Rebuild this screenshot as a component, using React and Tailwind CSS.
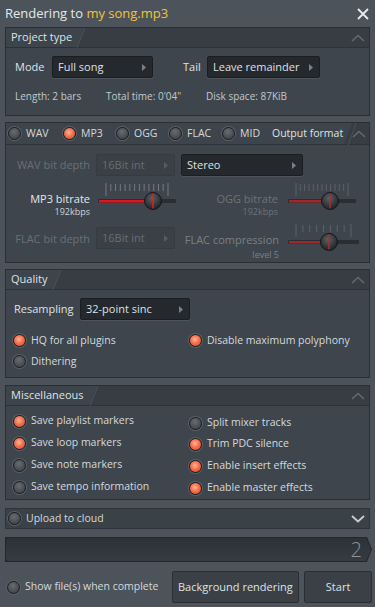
import React from "react";

const FONT = { fontFamily: '"Open Sans", "Noto Sans", sans-serif' };

function ChevronUp({ className = "mr-[4px]" }) {
  return (
    <svg width="14" height="8" viewBox="0 0 14 8" className={"shrink-0 " + className}>
      <polyline points="1,7 7,1.5 13,7" fill="none" stroke="#626970" strokeWidth="1.6" />
    </svg>
  );
}

function ChevronDown() {
  return (
    <svg width="14" height="8" viewBox="0 0 14 8" className="mr-[4px] shrink-0">
      <polyline points="1,1 7,6.5 13,1" fill="none" stroke="#c9ced2" strokeWidth="1.8" />
    </svg>
  );
}

function Radio({ on }) {
  return (
    <span
      className={
        "inline-block w-[13px] h-[13px] shrink-0 rounded-full border border-[#1c1f22] shadow-[0_0_0_1px_#5b6168] " +
        (on
          ? "bg-[radial-gradient(circle_at_45%_40%,#ffb394_0%,#f2714d_45%,#c93f22_100%)]"
          : "bg-[radial-gradient(circle_at_45%_35%,#676c71_0%,#4a4e53_60%,#383b3f_100%)]")
      }
    />
  );
}

function RadioLabel({ on, children, className = "" }) {
  return (
    <div className={"flex items-center gap-[5px] whitespace-nowrap " + className}>
      <Radio on={on} />
      <span>{children}</span>
    </div>
  );
}

function Dropdown({ text, width, disabled }) {
  return (
    <div
      className={
        "flex items-center justify-between h-[22px] rounded-[2px] pl-[5px] pr-[6px] text-[11px] whitespace-nowrap " +
        (disabled
          ? "bg-[#3a4046] border border-[#363b41] text-[#686e74]"
          : "bg-[#25292d] border border-[#1b1e21] text-[#dde1e4] shadow-[0_1px_0_#4d545b]")
      }
      style={{ width }}
    >
      <span>{text}</span>
      <svg width="4" height="7" viewBox="0 0 4 7">
        <polygon points="0,0 4,3.5 0,7" fill={disabled ? "#565c62" : "#7a8086"} />
      </svg>
    </div>
  );
}

function Slider({ width, knob, dim, n = 12, id }) {
  const ticks = [];
  for (let i = 0; i <= n; i++) {
    const x = 8 + ((width - 16) * i) / n;
    const end = i === 0 || i === n;
    ticks.push(
      <line
        key={i}
        x1={x}
        x2={x}
        y1={end ? 1 : 2}
        y2={end ? 14 : 9}
        stroke={dim ? "#5c6268" : "#757b81"}
        strokeWidth="1"
      />
    );
  }
  return (
    <svg width={width} height="30" viewBox={`0 0 ${width} 30`}>
      {ticks}
      <rect x="0" y="17" width={width} height="4" rx="1" fill="#2a2e32" />
      <rect x="1" y="18" width={knob} height="2.5" fill={dim ? "#a1272a" : "#e0161b"} />
      <defs>
        <radialGradient id={id} cx="45%" cy="35%" r="65%">
          <stop offset="0%" stopColor="#5a6065" />
          <stop offset="100%" stopColor="#1f2225" />
        </radialGradient>
      </defs>
      <circle cx={knob} cy="19" r="8.5" fill={`url(#${id})`} stroke="#15181a" strokeWidth="1" />
      <line x1={knob} x2={knob} y1="11.5" y2="26.5" stroke={dim ? "#b32a2c" : "#f01a1f"} strokeWidth="1.4" />
    </svg>
  );
}

function TabHeader({ title, tabW }) {
  return (
    <div className="relative flex h-[20px] items-center bg-[#373d43] border-b border-[#2d3237]">
      <div
        className="h-full flex items-center pl-[5px] bg-[#3d444b] [clip-path:polygon(0_0,100%_0,calc(100%-8px)_100%,0_100%)]"
        style={{ width: tabW }}
      >
        <span className="text-[11px] text-[#dfe3e6] whitespace-nowrap">{title}</span>
      </div>
      <svg width="10" height="20" className="absolute top-0" style={{ left: tabW - 9 }}>
        <line x1="9" y1="0" x2="1" y2="20" stroke="#4a5158" strokeWidth="1" />
      </svg>
      <div className="flex-1" />
      <ChevronUp />
    </div>
  );
}

function Panel({ children, height }) {
  return (
    <div
      className="mx-[5px] border border-[#2a2f34] bg-[#3e454c] flex flex-col"
      style={{ height }}
    >
      {children}
    </div>
  );
}

export default function App() {
  return (
    <div
      className="w-[375px] h-[607px] bg-[#4c535a] text-[10.5px] text-[#d5dadd] flex flex-col overflow-hidden"
      style={FONT}
    >
      {/* Title bar */}
      <div className="h-[27px] flex items-center justify-between pl-[5px] pr-[6px]">
        <div className="text-[13px] text-[#e6e9eb]">
          Rendering to <span className="text-[#f2c437]">my song.mp3</span>
        </div>
        <svg width="12" height="12" viewBox="0 0 12 12">
          <path d="M1 1 L11 11 M11 1 L1 11" stroke="#e8ebed" strokeWidth="1.8" />
        </svg>
      </div>

      {/* Project type */}
      <Panel height={89}>
        <TabHeader title="Project type" tabW={79} />
        <div className="flex items-center mt-[8px] pl-[9px]">
          <span className="w-[37px] text-[11px] text-[#dfe3e6]">Mode</span>
          <Dropdown text="Full song" width={101} />
          <span className="ml-[30px] w-[24px] text-[11px] text-[#dfe3e6]">Tail</span>
          <Dropdown text="Leave remainder" width={113} />
        </div>
        <div className="flex items-center mt-[11px] pl-[9px] text-[10px] text-[#c3c8cc]">
          <span className="w-[91px]">Length: 2 bars</span>
          <span className="w-[100px]">Total time: 0'04"</span>
          <span>Disk space: 87KiB</span>
        </div>
      </Panel>

      <div className="h-[6px]" />

      {/* Output format */}
      <Panel height={141}>
        <div className="relative flex h-[23px] items-center bg-[#373d43] border-b border-[#2d3237]">
          <div className="flex items-center pl-[2px] h-full flex-1 bg-[#3d444b] [clip-path:polygon(0_0,100%_0,calc(100%-8px)_100%,0_100%)]">
            <RadioLabel on={false} className="w-[55px]">WAV</RadioLabel>
            <RadioLabel on={true} className="w-[53px]">MP3</RadioLabel>
            <RadioLabel on={false} className="w-[53px]">OGG</RadioLabel>
            <RadioLabel on={false} className="w-[53px]">FLAC</RadioLabel>
            <RadioLabel on={false} className="w-[50px]">MID</RadioLabel>
            <span className="text-[10.5px] text-[#dfe3e6] whitespace-nowrap">Output format</span>
          </div>
          <svg width="10" height="23" className="absolute top-0 left-[341px]">
            <line x1="9" y1="0" x2="1" y2="23" stroke="#4a5158" strokeWidth="1" />
          </svg>
          <ChevronUp className="mr-[3px]" />
        </div>

        <div className="flex items-center mt-[9px]">
          <span className="w-[84px] text-right text-[#6a7076] text-[11px] whitespace-nowrap">WAV bit depth</span>
          <div className="ml-[6px]">
            <Dropdown text="16Bit int" width={79} disabled />
          </div>
          <div className="ml-[6px]">
            <Dropdown text="Stereo" width={122} />
          </div>
        </div>

        <div className="flex items-start mt-[6px] h-[34px]">
          <div className="w-[84px] flex flex-col items-end pt-[10px] leading-[13px]">
            <span className="text-[11px] text-[#e4e7ea] whitespace-nowrap">MP3 bitrate</span>
            <span className="text-[9px] text-[#d0d5d8]">192kbps</span>
          </div>
          <div className="ml-[8px]">
            <Slider width={78} knob={55} n={13} id="k1" />
          </div>
          <div className="w-[102px] flex flex-col items-end pt-[10px] leading-[13px]">
            <span className="text-[11px] text-[#6d7379] whitespace-nowrap">OGG bitrate</span>
            <span className="text-[9px] text-[#6d7379]">192kbps</span>
          </div>
          <div className="ml-[10px]">
            <Slider width={68} knob={42} dim n={12} id="k2" />
          </div>
        </div>

        <div className="flex items-start mt-[11px] h-[36px]">
          <div className="w-[84px] flex justify-end pt-[4px]">
            <span className="text-[11px] text-[#6a7076] whitespace-nowrap">FLAC bit depth</span>
          </div>
          <div className="ml-[6px]">
            <Dropdown text="16Bit int" width={79} disabled />
          </div>
          <div className="w-[104px] flex flex-col items-end pt-[5px] leading-[15px]">
            <span className="text-[11px] text-[#7a8086] whitespace-nowrap">FLAC compression</span>
            <span className="text-[9px] text-[#7a8086]">level 5</span>
          </div>
          <div className="ml-[9px] -mt-[4px]">
            <Slider width={71} knob={41} dim n={8} id="k3" />
          </div>
        </div>
      </Panel>

      <div className="h-[6px]" />

      {/* Quality */}
      <Panel height={109}>
        <TabHeader title="Quality" tabW={55} />
        <div className="flex items-center mt-[8px] pl-[8px]">
          <span className="w-[66px] text-[11px] text-[#dfe3e6]">Resampling</span>
          <Dropdown text="32-point sinc" width={110} />
        </div>
        <div className="flex mt-[10px] pl-[7px]">
          <div className="w-[176px] flex flex-col">
            <RadioLabel on={true} className="h-[21px]">HQ for all plugins</RadioLabel>
            <RadioLabel on={false} className="h-[21px]">Dithering</RadioLabel>
          </div>
          <div className="flex flex-col">
            <RadioLabel on={true} className="h-[21px]">Disable maximum polyphony</RadioLabel>
          </div>
        </div>
      </Panel>

      <div className="h-[7px]" />

      {/* Miscellaneous */}
      <Panel height={115}>
        <TabHeader title="Miscellaneous" tabW={92} />
        <div className="flex mt-[4px] pl-[7px]">
          <div className="w-[176px] flex flex-col">
            <RadioLabel on={true} className="h-[22px]">Save playlist markers</RadioLabel>
            <RadioLabel on={true} className="h-[22px]">Save loop markers</RadioLabel>
            <RadioLabel on={false} className="h-[22px]">Save note markers</RadioLabel>
            <RadioLabel on={false} className="h-[22px]">Save tempo information</RadioLabel>
          </div>
          <div className="flex flex-col pt-[3px]">
            <RadioLabel on={false} className="h-[20px]">Split mixer tracks</RadioLabel>
            <RadioLabel on={true} className="h-[22px]">Trim PDC silence</RadioLabel>
            <RadioLabel on={true} className="h-[22px]">Enable insert effects</RadioLabel>
            <RadioLabel on={true} className="h-[22px]">Enable master effects</RadioLabel>
          </div>
        </div>
      </Panel>

      <div className="h-[8px]" />

      {/* Upload to cloud */}
      <div className="mx-[5px] h-[21px] flex items-center justify-between pl-[2px] bg-[#3a4147] border border-[#2f343a]">
        <RadioLabel on={false}>Upload to cloud</RadioLabel>
        <ChevronDown />
      </div>

      <div className="h-[8px]" />

      {/* Progress */}
      <div className="ml-[5px] mr-[3px] h-[25px] bg-[#24282c] [clip-path:polygon(0_0,calc(100%-5px)_0,100%_50%,calc(100%-5px)_100%,0_100%)] p-[1px]">
        <div className="h-full w-full rounded-[3px] bg-[linear-gradient(#2c3136,#363c42)] [clip-path:polygon(0_0,calc(100%-5px)_0,100%_50%,calc(100%-5px)_100%,0_100%)] flex items-center justify-end pr-[9px]">
          <span className="text-[20px] font-light text-[#8d9398] leading-none">2</span>
        </div>
      </div>

      <div className="h-[9px]" />

      {/* Bottom */}
      <div className="flex items-center pl-[7px] pr-[3px]">
        <RadioLabel on={false} className="w-[165px]">Show file(s) when complete</RadioLabel>
        <div className="w-[128px] h-[32px] flex items-center justify-center bg-[#3a4046] border border-[#2a2e33] rounded-[2px] text-[#dfe3e6] text-[11px]">
          Background rendering
        </div>
        <div className="ml-[5px] w-[68px] h-[32px] flex items-center justify-center bg-[#3a4046] border border-[#2a2e33] rounded-[2px] text-[#dfe3e6] text-[11px]">
          Start
        </div>
      </div>
    </div>
  );
}
